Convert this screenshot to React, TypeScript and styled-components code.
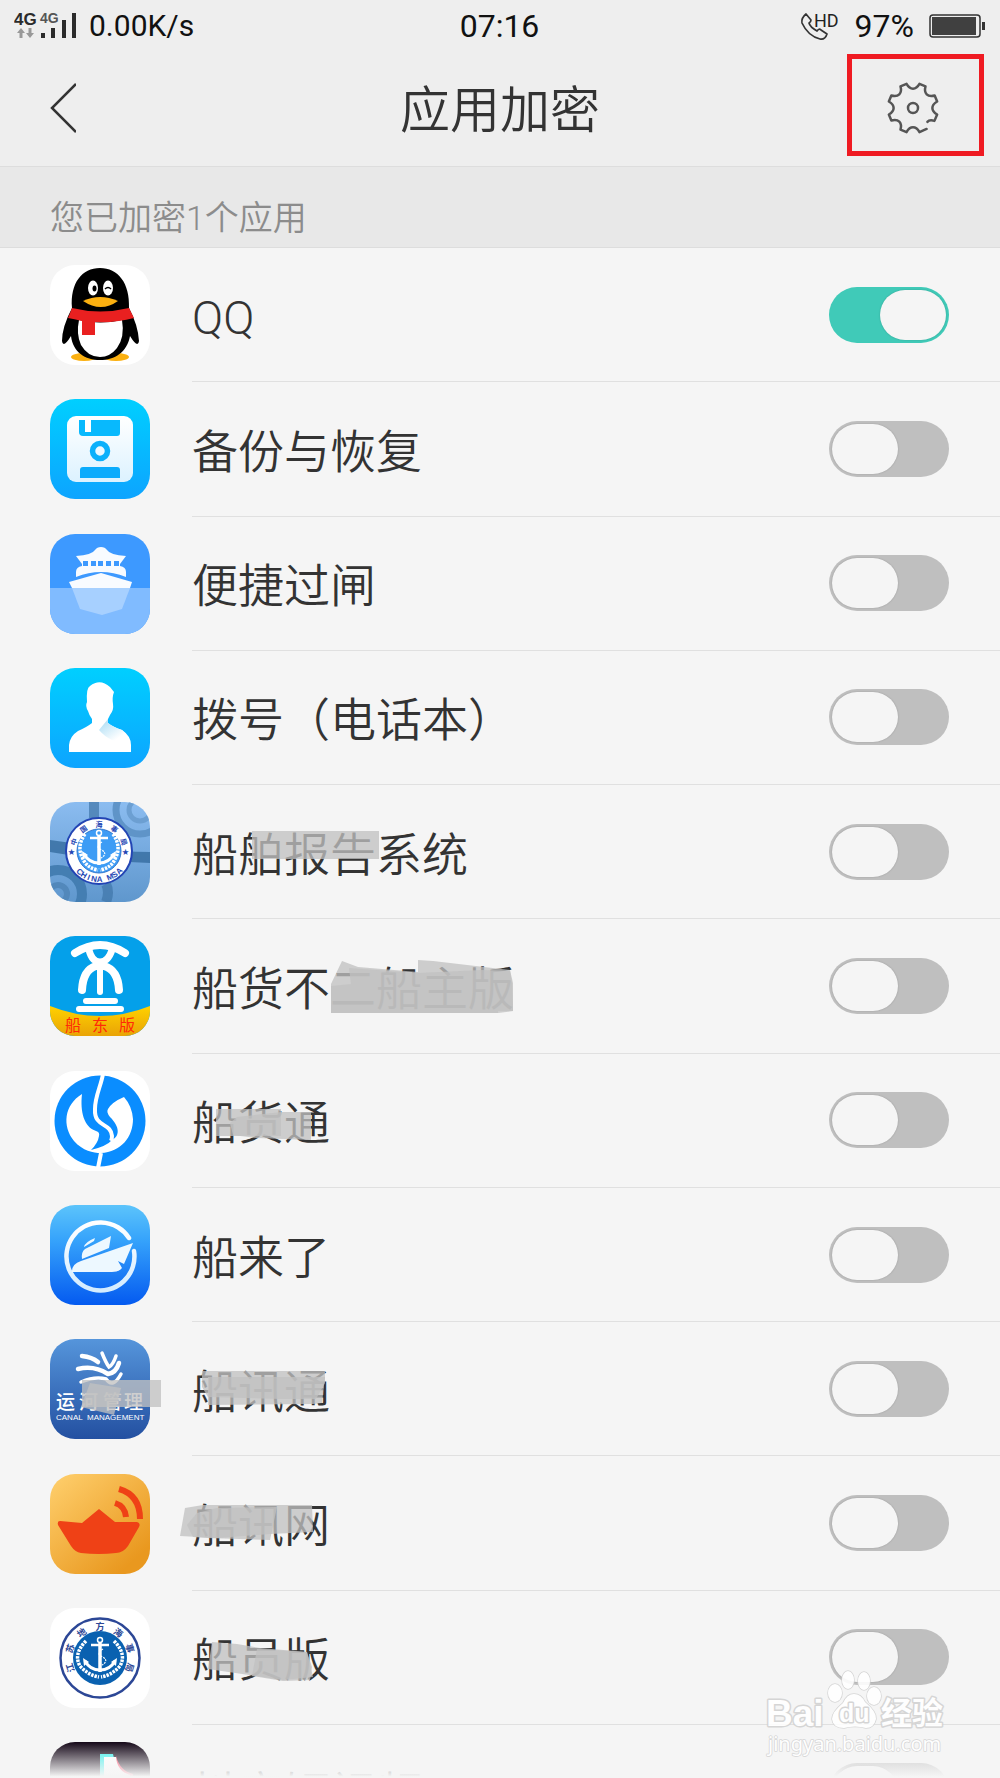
import React, { useState } from 'react';
import styled, { createGlobalStyle } from 'styled-components';

const FONT = 'Roboto, "Noto Sans CJK SC", sans-serif';

const GlobalStyle = createGlobalStyle`
  *, *::before, *::after { box-sizing: border-box; }
  body {
    margin: 0;
    background: #f5f5f5;
    color: #333;
    font-family: ${FONT};
  }
`;

const Page = styled.div`
  position: relative;
  display: flex;
  flex-direction: column;
  min-height: 100vh;
  overflow: hidden;
`;

const TopArea = styled.header`
  background: #eee;
  border-bottom: 1px solid #ddd;
`;

const StatusBar = styled.div`
  display: grid;
  grid-template-columns: 1fr auto 1fr;
  align-items: center;
  height: 50px;
  padding: 2px 15px 0 14px;
  color: #111;
`;

const StatusGroup = styled.div<{ $end?: boolean }>`
  display: flex;
  align-items: center;
  justify-content: ${p => (p.$end ? 'flex-end' : 'flex-start')};
  gap: ${p => (p.$end ? 15 : 12)}px;
`;

const StatusText = styled.span<{ $small?: boolean }>`
  font-size: ${p => (p.$small ? 30 : 32)}px;
  line-height: 40px;
`;

const NavBar = styled.div`
  display: grid;
  grid-template-columns: 1fr auto 1fr;
  align-items: center;
  height: 116px;
  padding: 0 50px;
`;

const Title = styled.h1`
  margin: 0;
  padding-top: 6px;
  font-size: 50px;
  line-height: 64px;
  font-weight: 350;
`;

const IconButton = styled.button<{ $end?: boolean }>`
  position: relative;
  display: flex;
  justify-self: ${p => (p.$end ? 'end' : 'start')};
  margin: 0;
  padding: 0 ${p => (p.$end ? 11 : 0)}px 0 0;
  border: 0;
  background: none;
  color: #333;
  cursor: pointer;
`;

const Highlight = styled.span`
  position: absolute;
  inset: -28px -34px -22px -40px;
  border: 5px solid #ef1a22;
`;

const Summary = styled.p`
  margin: 0;
  height: 81px;
  padding: 26px 50px 0;
  border-bottom: 1px solid #ddd;
  background: #e8e8e8;
  color: #8c8c8c;
  font-size: 34px;
  line-height: 50px;
  font-weight: 350;
`;

const AppList = styled.ul`
  flex: 1;
  display: grid;
  grid-template-rows: repeat(11, minmax(134px, 1fr)) 53px;
  margin: 0;
  padding: 0;
  list-style: none;
`;

const Row = styled.li<{ $peek?: boolean }>`
  position: relative;
  display: flex;
  align-items: ${p => (p.$peek ? 'flex-start' : 'center')};
  gap: 42px;
  padding: ${p => (p.$peek ? '17px' : '0')} 0 0 50px;
  overflow: ${p => (p.$peek ? 'hidden' : 'visible')};
`;

const RowBody = styled.div<{ $peek?: boolean }>`
  flex: 1;
  display: flex;
  align-items: center;
  justify-content: space-between;
  height: ${p => (p.$peek ? '100px' : '100%')};
  padding-right: 51px;
  border-bottom: 1px solid #e0e0e0;
`;

const Name = styled.label`
  position: relative;
  padding-top: 6px;
  font-size: 46px;
  line-height: 64px;
  font-weight: 350;
`;

const Cover = styled.svg`
  position: absolute;
  left: 0;
  top: 3px;
  width: 100%;
  height: 100%;
  overflow: visible;
  fill: #c1c1c1;
  fill-opacity: 0.77;
`;

const Tile = styled.svg`
  flex: none;
  width: 100px;
  height: 100px;
  overflow: visible;
`;

const Switch = styled.input`
  appearance: none;
  flex: none;
  display: flex;
  width: 120px;
  height: 56px;
  margin: 0;
  padding: 3px;
  border-radius: 28px;
  background: #bfbfbf;
  cursor: pointer;

  &::before {
    content: '';
    width: 66px;
    height: 50px;
    border-radius: 25px;
    background: #f5f5f5;
    box-shadow: 0 0 2px rgba(0, 0, 0, 0.2);
  }
  &:checked {
    justify-content: flex-end;
    background: #40cab8;
  }
`;

const Fade = styled.div`
  position: absolute;
  inset: 17px 0 0;
  background: linear-gradient(rgba(245, 245, 245, 0), #f5f5f5 96%);
`;

const Watermark = styled.svg`
  position: absolute;
  right: 50px;
  bottom: 18px;
  width: 190px;
  height: 92px;
  pointer-events: none;
`;

/* ---------- header drawings ---------- */

const Signal = () => (
  <svg width="63" height="28" viewBox="0 0 63 28" fill="#2b2b2b" role="img" aria-label="4G">
    <text x="0" y="13" fontFamily="Liberation Sans" fontWeight="700" fontSize="17">4G</text>
    <text x="26" y="11" fontFamily="Liberation Sans" fontWeight="700" fontSize="14" fill="#555">4G</text>
    <path d="M7 16l4 5H8.500v5h-3v-5H3zM16 26l-4-5h2.500v-5h3v5H20z" fill="#999" />
    <path d="M27 21h4v5h-4zM37 16h4v10h-4zM48 8h4v18h-4zM58 1h4v25h-4z" />
  </svg>
);

const PhoneHd = () => (
  <svg width="40" height="29" viewBox="0 0 40 29" role="img" aria-label="HD">
    <path
      d="M6 2L11 8Q11 10 9 11Q10 15 17 19Q19 16 21 18L27 22Q25 28 20 27Q8 24 2 11Q1 6 6 2Z"
      fill="none" stroke="#333" strokeWidth="1.700" strokeLinejoin="round"
    />
    <text x="14" y="15" fontFamily="Roboto" fontSize="18" fill="#222">HD</text>
  </svg>
);

const Battery = () => (
  <svg width="56" height="24" viewBox="0 0 56 24" role="img" aria-label="battery">
    <rect x="1" y="1" width="50" height="22" rx="3" fill="none" stroke="#333" strokeWidth="1.500" />
    <rect x="3" y="3" width="44" height="18" fill="#404040" />
    <rect x="53" y="8" width="3" height="8" fill="#333" />
  </svg>
);

const Chevron = () => (
  <svg width="26" height="50" viewBox="0 0 26 50" fill="none" stroke="currentColor" strokeWidth="2.500" aria-hidden="true">
    <path d="M26 1L2 25L26 49" />
  </svg>
);

const onGear = (deg: number, r = 25) => {
  const a = (deg * Math.PI) / 180;
  return `${(26 + r * Math.cos(a)).toFixed(2)} ${(26 + r * Math.sin(a)).toFixed(2)}`;
};
const gearPath =
  `M${onGear(57)}` +
  [90, 135, 180, 225, 270, 315, 360]
    .map(a => `L${onGear(a - 15)}C${onGear(a - 9, 18)} ${onGear(a + 9, 18)} ${onGear(a + 15)}`)
    .join('') +
  `L${onGear(391)}Q${onGear(395, 20)} ${onGear(404, 20)}`;

const Gear = () => (
  <svg width="52" height="52" viewBox="0 0 52 52" fill="none" stroke="#555" strokeWidth="2.500" strokeLinejoin="round" strokeLinecap="round" aria-hidden="true">
    <path d={gearPath} />
    <circle cx="26" cy="26" r="5" />
  </svg>
);

/* ---------- app icons, drawn on a 100 x 100 tile ---------- */

const Base = ({ fill }: { fill: string }) => <rect width="100" height="100" rx="25" fill={fill} />;

const Vertical = ({ id, from, to }: { id: string; from: string; to: string }) => (
  <linearGradient id={id} x1="0" y1="0" x2="0" y2="1">
    <stop offset="0" stopColor={from} />
    <stop offset="1" stopColor={to} />
  </linearGradient>
);

const Ring = ({ chars, cx, cy, r, from, step, size, fill, flip }: {
  chars: string; cx: number; cy: number; r: number; from: number; step: number; size: number; fill: string; flip?: boolean;
}) => (
  <g fill={fill} fontSize={size} fontWeight="700" textAnchor="middle" fontFamily={'"Liberation Sans", "Noto Sans CJK SC", sans-serif'}>
    {chars.split('').map((c, i) => (
      <text key={i} transform={`rotate(${from + step * i} ${cx} ${cy})`} x={cx} y={flip ? cy + r : cy - r}>{c}</text>
    ))}
  </g>
);

const Anchor = ({ cx, cy, leaf }: { cx: number; cy: number; leaf: number }) => (
  <g transform={`translate(${cx} ${cy})`} fill="none" stroke="#fff">
    <circle cy="-17" r="2.500" strokeWidth="1.500" />
    <path d="M0 -14V15" strokeWidth="3.500" />
    <path d="M-9 -12H9" strokeWidth="2.500" />
    <path d="M-15 4Q-10 13 0 13Q10 13 15 4" strokeWidth="3" />
    <path d="M-17 1l1 8l5 -4zM17 1l-1 8l-5 -4z" fill="#fff" strokeWidth="0" />
    <path d="M3 -8Q-5 -3 3 0Q9 4 2 8" strokeWidth="1.200" strokeDasharray="2 1" />
    <path
      d={`M-14 -16Q-${leaf + 3} -3 -${leaf - 4} 9Q-12 18 -1 20M14 -16Q${leaf + 3} -3 ${leaf - 4} 9Q12 18 1 20`}
      strokeWidth="3.500" strokeDasharray="2.500 1"
    />
  </g>
);

const icons: Record<string, React.ReactNode> = {
  qq: (
    <>
      <Base fill="#fff" />
      <ellipse cx="34" cy="92" rx="13" ry="4" fill="#fbb010" />
      <ellipse cx="66" cy="92" rx="13" ry="4" fill="#fbb010" />
      <path d="M22 43C20 18 32 3 50 3S80 18 79 43Q88 60 89 76Q88 84 80 71C77 87 65 95 50 95S23 87 21 71Q13 84 12 76Q12 62 22 43Z" />
      <path d="M29 55Q50 60 72 55Q75 72 67 83Q60 92 50 92Q38 92 31 80Q26 69 29 55Z" fill="#fff" />
      <ellipse cx="43" cy="23" rx="5" ry="7.500" fill="#fff" />
      <ellipse cx="58" cy="23" rx="5" ry="7.500" fill="#fff" />
      <ellipse cx="44.500" cy="23.500" rx="2" ry="3" />
      <path d="M55 24Q58 21 61 24" fill="none" stroke="#000" strokeWidth="1.500" />
      <path d="M33 36Q50 28 68 36Q51 48 33 36Z" fill="#fbb010" />
      <path d="M22 43Q50 50 79 43L84 53Q66 58 45 57V70H32V56Q24 54 18 53Z" fill="#e92020" />
    </>
  ),
  backup: (
    <>
      <defs>
        <Vertical id="bk" from="#00cfff" to="#0da4ff" />
        <Vertical id="bkd" from="#fff" to="#dcf2ff" />
      </defs>
      <Base fill="url(#bk)" />
      <rect x="17" y="17" width="66" height="66" rx="9" fill="url(#bkd)" />
      <path d="M29 21H70V34Q70 37 67 37H33Q29 37 29 33Z" fill="#08b9fd" />
      <path d="M35 21h6v12h-6z" fill="#fff" />
      <circle cx="50" cy="52" r="7.500" fill="none" stroke="#0bb0fb" strokeWidth="5.500" />
      <path d="M30 79V71Q30 68 33 68H67Q70 68 70 71V79Z" fill="#0aabfc" />
    </>
  ),
  lock: (
    <>
      <Base fill="#3d99ff" />
      <path d="M0 54H100V75A25 25 0 0 1 75 100H25A25 25 0 0 1 0 75Z" fill="#80bbff" />
      <path d="M26 22Q42 21 45 16Q47 13 51 13Q55 13 57 16Q60 21 76 22L70 30V32Q76 33 76 38V43Q51 33 26 43V38Q26 33 32 32V30Z" fill="#f8fbff" />
      <path d="M33 27h5v5h-5zM41 27h5v5h-5zM48 27h5v5h-5zM56 27h5v5h-5zM64 27h5v5h-5z" fill="#3d99ff" />
      <path d="M19 48L51 39L82 48L80 54H22Z" fill="#f8fbff" />
      <path d="M22 54H80L72 75L52 81L30 75Z" fill="#a7d0ff" />
    </>
  ),
  dial: (
    <>
      <defs>
        <Vertical id="dl" from="#00cfff" to="#0da4ff" />
        <linearGradient id="dls" x1="0.100" y1="0.200" x2="0.600" y2="0.800">
          <stop offset="0" stopColor="#b8e2f6" />
          <stop offset="1" stopColor="#fff" />
        </linearGradient>
      </defs>
      <Base fill="url(#dl)" />
      <path d="M37 34Q36 20 40 18Q50 10 60 19L64 24Q62 29 63 36Q64 42 60 47L58 51V55Q63 59 72 62Q81 68 81 77V84H19V77Q20 68 28 63Q37 59 42 55V51Q39 47 38 43Q35 38 37 34Z" fill="#fff" />
      <path d="M58 51V55Q63 59 72 62Q78 67 79 76Q60 75 49 62Z" fill="url(#dls)" />
    </>
  ),
  msa: (
    <>
      <defs>
        <Vertical id="ms" from="#8bbcf0" to="#5f97cd" />
        <clipPath id="msc"><rect width="100" height="100" rx="25" /></clipPath>
      </defs>
      <Base fill="url(#ms)" />
      <g clipPath="url(#msc)" fill="none">
        <path d="M0 38Q30 42 50 46T100 50V61Q60 60 0 50Z" fill="#356b9f" opacity="0.800" />
        <path d="M44 0V16M56 82Q60 90 56 100" stroke="#3f75a8" strokeWidth="10" opacity="0.700" />
        <circle cx="90" cy="8" r="24" stroke="#5f94c8" strokeWidth="7" />
        <circle cx="90" cy="8" r="11" stroke="#6c9fd2" strokeWidth="5" />
        <circle cx="8" cy="92" r="24" stroke="#447eb2" strokeWidth="10" />
        <circle cx="8" cy="92" r="9" stroke="#5288bb" strokeWidth="6" />
      </g>
      <circle cx="49" cy="49" r="33" fill="#fff" stroke="#2345b4" strokeWidth="2" />
      <circle cx="49" cy="49" r="22" fill="#3d9cf5" stroke="#2f77cf" />
      <Anchor cx={49} cy={48} leaf={20} />
      <Ring chars="中国海事局" cx={49} cy={49} r={24} from={-70} step={35} size={7} fill="#2345b4" />
      <Ring chars="CHINA MSA" cx={49} cy={49} r={31} from={43} step={-11} size={8} fill="#2345b4" flip />
      <text x="18" y="52" fontSize="7" fill="#2345b4">★</text>
      <text x="72" y="52" fontSize="7" fill="#2345b4">★</text>
    </>
  ),
  owner: (
    <>
      <defs>
        <Vertical id="ow" from="#ffd200" to="#e9a306" />
      </defs>
      <Base fill="#04a0ea" />
      <path d="M0 70Q50 90 100 70V75A25 25 0 0 1 75 100H25A25 25 0 0 1 0 75Z" fill="url(#ow)" />
      <g fill="none" stroke="#fff" strokeWidth="8" strokeLinecap="round">
        <path d="M25 17Q50 1 75 17" />
        <path d="M39 14Q42 26 50 26Q58 26 62 14" strokeWidth="7" />
        <path d="M32 54Q33 34 46 30H54Q68 34 69 54" />
        <path d="M50 30V56" strokeWidth="6" />
        <path d="M36 65H65M29 73H71" strokeWidth="6" />
      </g>
      <g fill="#ff2a08" fontFamily="Noto Sans CJK SC" fontSize="16">
        <text x="15" y="95">船</text>
        <text x="42" y="95">东</text>
        <text x="69" y="95">版</text>
      </g>
    </>
  ),
  cargo: (
    <>
      <Base fill="#fff" />
      <circle cx="50" cy="50" r="45.500" fill="#0a8dff" />
      <path d="M32 23C14 34 12 55 24 70C33 80 43 82 51 82C71 81 83 66 83 48Q82 35 74 26Q62 31 58 38Q56 41 60 46C70 56 70 65 62 69Q57 75 41 79Q48 72 49 65Q50 61 46 60C34 56 30 41 32 23Z" fill="#fff" />
      <path d="M53 3C51 15 45 25 45 38C44 57 61 51 62 65Q62 68 61 70M51 82L48 97" fill="none" stroke="#fff" strokeWidth="4" />
    </>
  ),
  coming: (
    <>
      <defs>
        <linearGradient id="cm" x1="0" y1="0" x2="0" y2="1">
          <stop offset="0" stopColor="#5cc4fb" />
          <stop offset="0.350" stopColor="#36a3fb" />
          <stop offset="1" stopColor="#045af0" />
        </linearGradient>
        <Vertical id="cmw" from="#fff" to="#d3ecff" />
      </defs>
      <Base fill="url(#cm)" />
      <path d="M79 33A34 34 0 1 0 84 46" fill="none" stroke="url(#cmw)" strokeWidth="4.500" strokeLinecap="round" />
      <path d="M22 66Q22 59 31 56L83 38L74 59L68 56L72 63Q69 67 62 67H22Z" fill="#edf8ff" />
      <path d="M32 54Q31 47 35 44L61 31L59 43ZM34 42Q35 37 45 33L44 36Z" fill="#edf8ff" />
    </>
  ),
  canal: (
    <>
      <defs>
        <Vertical id="cn" from="#5595db" to="#2350a1" />
      </defs>
      <Base fill="url(#cn)" />
      <g fill="none" stroke="#fff" strokeWidth="4.500" strokeLinecap="round">
        <path d="M32 17Q42 18 48 23" />
        <path d="M52 14Q56 24 59 28Q63 26 66 17" strokeWidth="3.500" />
        <path d="M28 30Q44 26 58 35Q66 34 69 24" />
        <path d="M31 43Q45 37 56 40Q63 50 71 35" strokeWidth="3.500" />
      </g>
      <g fill="#fff" fontFamily={'"Noto Sans CJK SC"'} fontSize="19" fontWeight="500">
        <text x="6" y="70">运</text>
        <text x="29" y="70">河</text>
        <text x="53" y="70">管</text>
        <text x="74" y="70">理</text>
      </g>
      <text x="6" y="81" fontFamily="Liberation Sans" fontSize="8" fill="#fff">CANAL</text>
      <text x="37" y="81" fontFamily="Liberation Sans" fontSize="8" fill="#fff">MANAGEMENT</text>
      <path d="M32 41H111V68H32Z" fill="#c1c1c1" fillOpacity="0.770" />
      <path d="M40 44L71 49L64 76L31 68Z" fill="#c1c1c1" fillOpacity="0.770" />
    </>
  ),
  radio: (
    <>
      <defs>
        <linearGradient id="rd" x1="0" y1="0" x2="0.800" y2="0.900">
          <stop offset="0" stopColor="#ffd06e" />
          <stop offset="1" stopColor="#e9981f" />
        </linearGradient>
      </defs>
      <Base fill="url(#rd)" />
      <path d="M10 47L32 49L49 35L65 48L87 48Q91 49 89 53L78 72Q73 79 66 79Q49 81 31 79Q25 78 21 72L8 51Q7 47 10 47Z" fill="#ef4116" />
      <path d="M65 29Q75 32 76 43M69 15Q90 21 90 45" fill="none" stroke="#ef4116" strokeWidth="6" />
    </>
  ),
  crew: (
    <>
      <Base fill="#fff" />
      <circle cx="50" cy="50" r="39.500" fill="#fff" stroke="#2c4796" strokeWidth="2.500" />
      <circle cx="50" cy="50" r="27" fill="#0a61b0" />
      <Anchor cx={50} cy={49} leaf={24} />
      <Ring chars="江苏地方海事局" cx={50} cy={50} r={28} from={-108} step={36} size={9} fill="#2c4796" />
    </>
  ),
  video: (
    <>
      <Base fill="#150818" />
      <path d="M50 12H63Q66 29 80 31V45H63V80H50Z" fill="#34f0ec" />
      <path d="M66 14Q70 29 83 32V45H66Z" fill="#fd3459" />
      <path d="M54 15H66Q67 29 80 33V45H66V80H54Z" fill="#fff" />
    </>
  ),
};

interface Entry {
  icon: string;
  name: string;
  covers?: string[];
}

const entries: Entry[] = [
  { icon: 'qq', name: 'QQ' },
  { icon: 'backup', name: '备份与恢复' },
  { icon: 'lock', name: '便捷过闸' },
  { icon: 'dial', name: '拨号（电话本）' },
  { icon: 'msa', name: '船舶报告系统', covers: ['60,11 187,11 187,39 60,39'] },
  {
    icon: 'owner',
    name: '船货不二船主版',
    covers: [
      '139,30 150,7 166,13 226,18 226,6 241,7 292,13 318,16 321,29 321,57 306,59 139,59',
      '139,32 159,30 157,14 226,19 290,16 318,17 320,29 321,57 306,57 306,59 139,59',
    ],
  },
  { icon: 'cargo', name: '船货通', covers: ['24,21 89,21 89,48 24,48', '38,35 45,29 90,24 119,24 119,52 65,50 41,47'] },
  { icon: 'coming', name: '船来了' },
  { icon: 'canal', name: '船讯通', covers: ['10,14 133,14 133,26 124,42 90,42 16,40 10,30', '16,20 133,20 130,46 121,47 16,48'] },
  {
    icon: 'radio',
    name: '船讯网',
    covers: ['-7,17 11,14 120,14 121,41 78,43 25,47 -12,45', '-5,34 5,22 25,17 85,16 78,49 15,47 1,46'],
  },
  {
    icon: 'crew',
    name: '船员版',
    covers: ['20,17 45,19 68,23 115,27 121,52 91,55 71,52 16,44', '65,24 115,27 120,42 118,55 91,56 60,51'],
  },
  { icon: 'video', name: '抖音短视频' },
];

const AppRow = ({ entry, on, peek, onToggle }: { entry: Entry; on: boolean; peek: boolean; onToggle: () => void }) => (
  <Row $peek={peek}>
    <Tile viewBox="0 0 100 100" aria-hidden="true">{icons[entry.icon]}</Tile>
    <RowBody $peek={peek}>
      <Name htmlFor={entry.icon}>
        {entry.name}
        {entry.covers && (
          <Cover aria-hidden="true">
            {entry.covers.map(points => <polygon key={points} points={points} />)}
          </Cover>
        )}
      </Name>
      <Switch type="checkbox" id={entry.icon} checked={on} onChange={onToggle} />
    </RowBody>
    {peek && <Fade />}
  </Row>
);

export default function App() {
  const [locked, setLocked] = useState<string[]>(['qq']);
  const toggle = (id: string) =>
    setLocked(list => (list.includes(id) ? list.filter(x => x !== id) : [...list, id]));

  return (
    <Page>
      <GlobalStyle />
      <TopArea>
        <StatusBar>
          <StatusGroup>
            <Signal />
            <StatusText $small>0.00K/s</StatusText>
          </StatusGroup>
          <StatusText>07:16</StatusText>
          <StatusGroup $end>
            <PhoneHd />
            <StatusText>97%</StatusText>
            <Battery />
          </StatusGroup>
        </StatusBar>
        <NavBar>
          <IconButton aria-label="返回"><Chevron /></IconButton>
          <Title>应用加密</Title>
          <IconButton $end aria-label="设置">
            <Gear />
            <Highlight />
          </IconButton>
        </NavBar>
      </TopArea>
      <Summary>您已加密{locked.length}个应用</Summary>
      <AppList>
        {entries.map((entry, i) => (
          <AppRow
            key={entry.icon}
            entry={entry}
            on={locked.includes(entry.icon)}
            peek={i === entries.length - 1}
            onToggle={() => toggle(entry.icon)}
          />
        ))}
      </AppList>
      <Watermark viewBox="0 0 190 92" fill="#fff" stroke="#d2d2d2" strokeWidth="3" paintOrder="stroke" strokeLinejoin="round" opacity="0.900">
        <text x="6" y="58" fontFamily="Liberation Sans" fontWeight="700" fontSize="37">Bai</text>
        <g strokeWidth="1.500">
          <ellipse cx="75" cy="25" rx="7" ry="9" />
          <ellipse cx="88" cy="12" rx="6" ry="9" />
          <ellipse cx="104" cy="13" rx="6" ry="9" />
          <ellipse cx="114" cy="28" rx="7" ry="9" />
          <path d="M94 26Q101 26 105 34Q117 44 116 51Q114 60 106 60Q95 57 84 60Q73 60 72 51Q72 44 83 35Q87 26 94 26Z" />
        </g>
        <text x="79" y="54" fontFamily="Liberation Sans" fontWeight="700" fontSize="25">du</text>
        <text x="121" y="56" fontFamily="Noto Sans CJK SC" fontWeight="700" fontSize="31">经验</text>
        <text x="8" y="83" fontFamily="Noto Sans" fontSize="20" strokeWidth="1.500">jingyan.baidu.com</text>
      </Watermark>
    </Page>
  );
}
